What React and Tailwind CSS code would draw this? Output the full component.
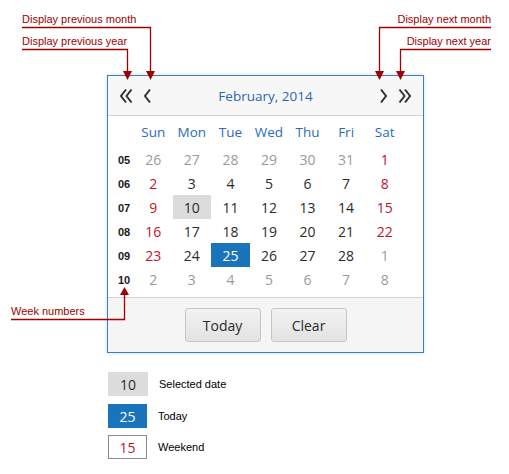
import React from 'react';

const weeks = [
  { no: '05', days: [['26', 'o'], ['27', 'o'], ['28', 'o'], ['29', 'o'], ['30', 'o'], ['31', 'o'], ['1', 'w']] },
  { no: '06', days: [['2', 'w'], ['3', 'n'], ['4', 'n'], ['5', 'n'], ['6', 'n'], ['7', 'n'], ['8', 'w']] },
  { no: '07', days: [['9', 'w'], ['10', 's'], ['11', 'n'], ['12', 'n'], ['13', 'n'], ['14', 'n'], ['15', 'w']] },
  { no: '08', days: [['16', 'w'], ['17', 'n'], ['18', 'n'], ['19', 'n'], ['20', 'n'], ['21', 'n'], ['22', 'w']] },
  { no: '09', days: [['23', 'w'], ['24', 'n'], ['25', 't'], ['26', 'n'], ['27', 'n'], ['28', 'n'], ['1', 'o']] },
  { no: '10', days: [['2', 'o'], ['3', 'o'], ['4', 'o'], ['5', 'o'], ['6', 'o'], ['7', 'o'], ['8', 'o']] },
];

const dayNames = ['Sun', 'Mon', 'Tue', 'Wed', 'Thu', 'Fri', 'Sat'];

const cellClass = {
  o: 'text-[#9a9a9a]',
  w: 'text-[#c8102e]',
  n: 'text-[#2b2b2b]',
  s: 'bg-[#dcdcdc] text-[#2b2b2b]',
  t: 'bg-[#1a74bc] text-white',
};

const Chevron = ({ dir, double }) => {
  const flip = dir === 'right';
  return (
    <svg width={double ? 14 : 9} height="16" viewBox={double ? '0 0 14 16' : '0 0 9 16'} className="block">
      <g fill="none" stroke="#333" strokeWidth="2" transform={flip ? `translate(${double ? 14 : 9} 0) scale(-1 1)` : undefined}>
        <polyline points="7,1.5 2,8 7,14.5" />
        {double && <polyline points="12.5,1.5 7.5,8 12.5,14.5" />}
      </g>
    </svg>
  );
};

const Callouts = () => (
  <>
    <svg className="absolute left-0 top-0 pointer-events-none" width="509" height="474">
      <g stroke="#a00000" strokeWidth="1.3" fill="none">
        <polyline points="22,27.5 150.5,27.5 150.5,72" />
        <polyline points="22,49.5 127.5,49.5 127.5,72" />
        <polyline points="491,27.5 379.5,27.5 379.5,72" />
        <polyline points="491,49.5 400.5,49.5 400.5,72" />
        <polyline points="11,319.5 124.5,319.5 124.5,294" />
      </g>
      <g fill="#a00000">
        <polygon points="146,71 155,71 150.5,80" />
        <polygon points="123,71 132,71 127.5,80" />
        <polygon points="375,71 384,71 379.5,80" />
        <polygon points="396,71 405,71 400.5,80" />
        <polygon points="120,295 129,295 124.5,287" />
      </g>
    </svg>
    <span className="absolute left-[22px] top-[13px] text-[11px] leading-[13px] text-[#a00000] font-['Liberation_Sans',sans-serif]">Display previous month</span>
    <span className="absolute left-[22px] top-[35px] text-[11px] leading-[13px] text-[#a00000] font-['Liberation_Sans',sans-serif]">Display previous year</span>
    <span className="absolute right-[18px] top-[13px] text-[11px] leading-[13px] text-[#a00000] font-['Liberation_Sans',sans-serif]">Display next month</span>
    <span className="absolute right-[18px] top-[35px] text-[11px] leading-[13px] text-[#a00000] font-['Liberation_Sans',sans-serif]">Display next year</span>
    <span className="absolute left-[11px] top-[305px] text-[11px] leading-[13px] text-[#a00000] font-['Liberation_Sans',sans-serif]">Week numbers</span>
  </>
);

const LegendRow = ({ box, label }) => (
  <div className="flex items-center">
    {box}
    <span className="ml-[11px] text-[11px] text-black font-['Liberation_Sans',sans-serif]">{label}</span>
  </div>
);

export default function App() {
  return (
    <div className="relative w-[509px] h-[474px] bg-white overflow-hidden font-['Open_Sans',sans-serif]">
      <div className="pt-[75px] pl-[107px]">
        {/* Calendar */}
        <div className="w-[317px] border border-[#3a7fc4] bg-white shadow-[0_0_4px_rgba(0,0,0,0.15)]">
          <div className="h-[40px] bg-[#f7f7f7] border-b border-[#d2d2d2] flex items-center px-[11px]">
            <div className="flex items-center gap-[10px]">
              <Chevron dir="left" double />
              <Chevron dir="left" />
            </div>
            <div className="flex-1 text-center text-[13.5px] text-[#2a66b0] pt-[1px]">February, 2014</div>
            <div className="flex items-center gap-[10px]">
              <Chevron dir="right" />
              <Chevron dir="right" double />
            </div>
          </div>

          <div className="pt-[4px] pb-[6px] grid grid-cols-[26px_repeat(7,38.57px)] text-[14px]">
            <div className="h-[24px]" />
            {dayNames.map((d) => (
              <div key={d} className="h-[24px] flex items-center justify-center text-[13.5px] text-[#2a6cb8]">{d}</div>
            ))}
            <div className="col-span-8 h-[3px]" />
            {weeks.map((w) => (
              <React.Fragment key={w.no}>
                <div className="h-[24px] flex items-center justify-center pl-[6px] pt-[2px] text-[11px] font-bold text-[#1a1a1a] font-['Liberation_Sans',sans-serif]">{w.no}</div>
                {w.days.map(([n, k], i) => (
                  <div key={i} className={`h-[24px] flex items-center justify-center ${cellClass[k]}`}>{n}</div>
                ))}
              </React.Fragment>
            ))}
          </div>

          <div className="border-t border-[#d2d2d2] bg-[#f5f5f5] h-[55px] flex items-center justify-center gap-[10px]">
            <button className="w-[76px] h-[34px] rounded-[3px] border border-[#c6c6c6] bg-gradient-to-b from-[#f2f2f2] to-[#e2e2e2] text-[14px] text-[#2b2b2b]">Today</button>
            <button className="w-[76px] h-[34px] rounded-[3px] border border-[#c6c6c6] bg-gradient-to-b from-[#f2f2f2] to-[#e2e2e2] text-[14px] text-[#2b2b2b]">Clear</button>
          </div>
        </div>

        {/* Legend */}
        <div className="mt-[19px] ml-[1px] flex flex-col">
          <LegendRow
            box={<div className="w-[40px] h-[24px] bg-[#dcdcdc] flex items-center justify-center text-[14px] text-[#2b2b2b]">10</div>}
            label="Selected date"
          />
          <div className="h-[8px]" />
          <LegendRow
            box={<div className="w-[39px] h-[24px] bg-[#1a74bc] flex items-center justify-center text-[14px] text-white">25</div>}
            label="Today"
          />
          <div className="h-[7px]" />
          <LegendRow
            box={<div className="w-[39px] h-[24px] border border-[#8a8a8a] bg-white flex items-center justify-center text-[14px] text-[#c8102e]">15</div>}
            label="Weekend"
          />
        </div>
      </div>

      <Callouts />
    </div>
  );
}
